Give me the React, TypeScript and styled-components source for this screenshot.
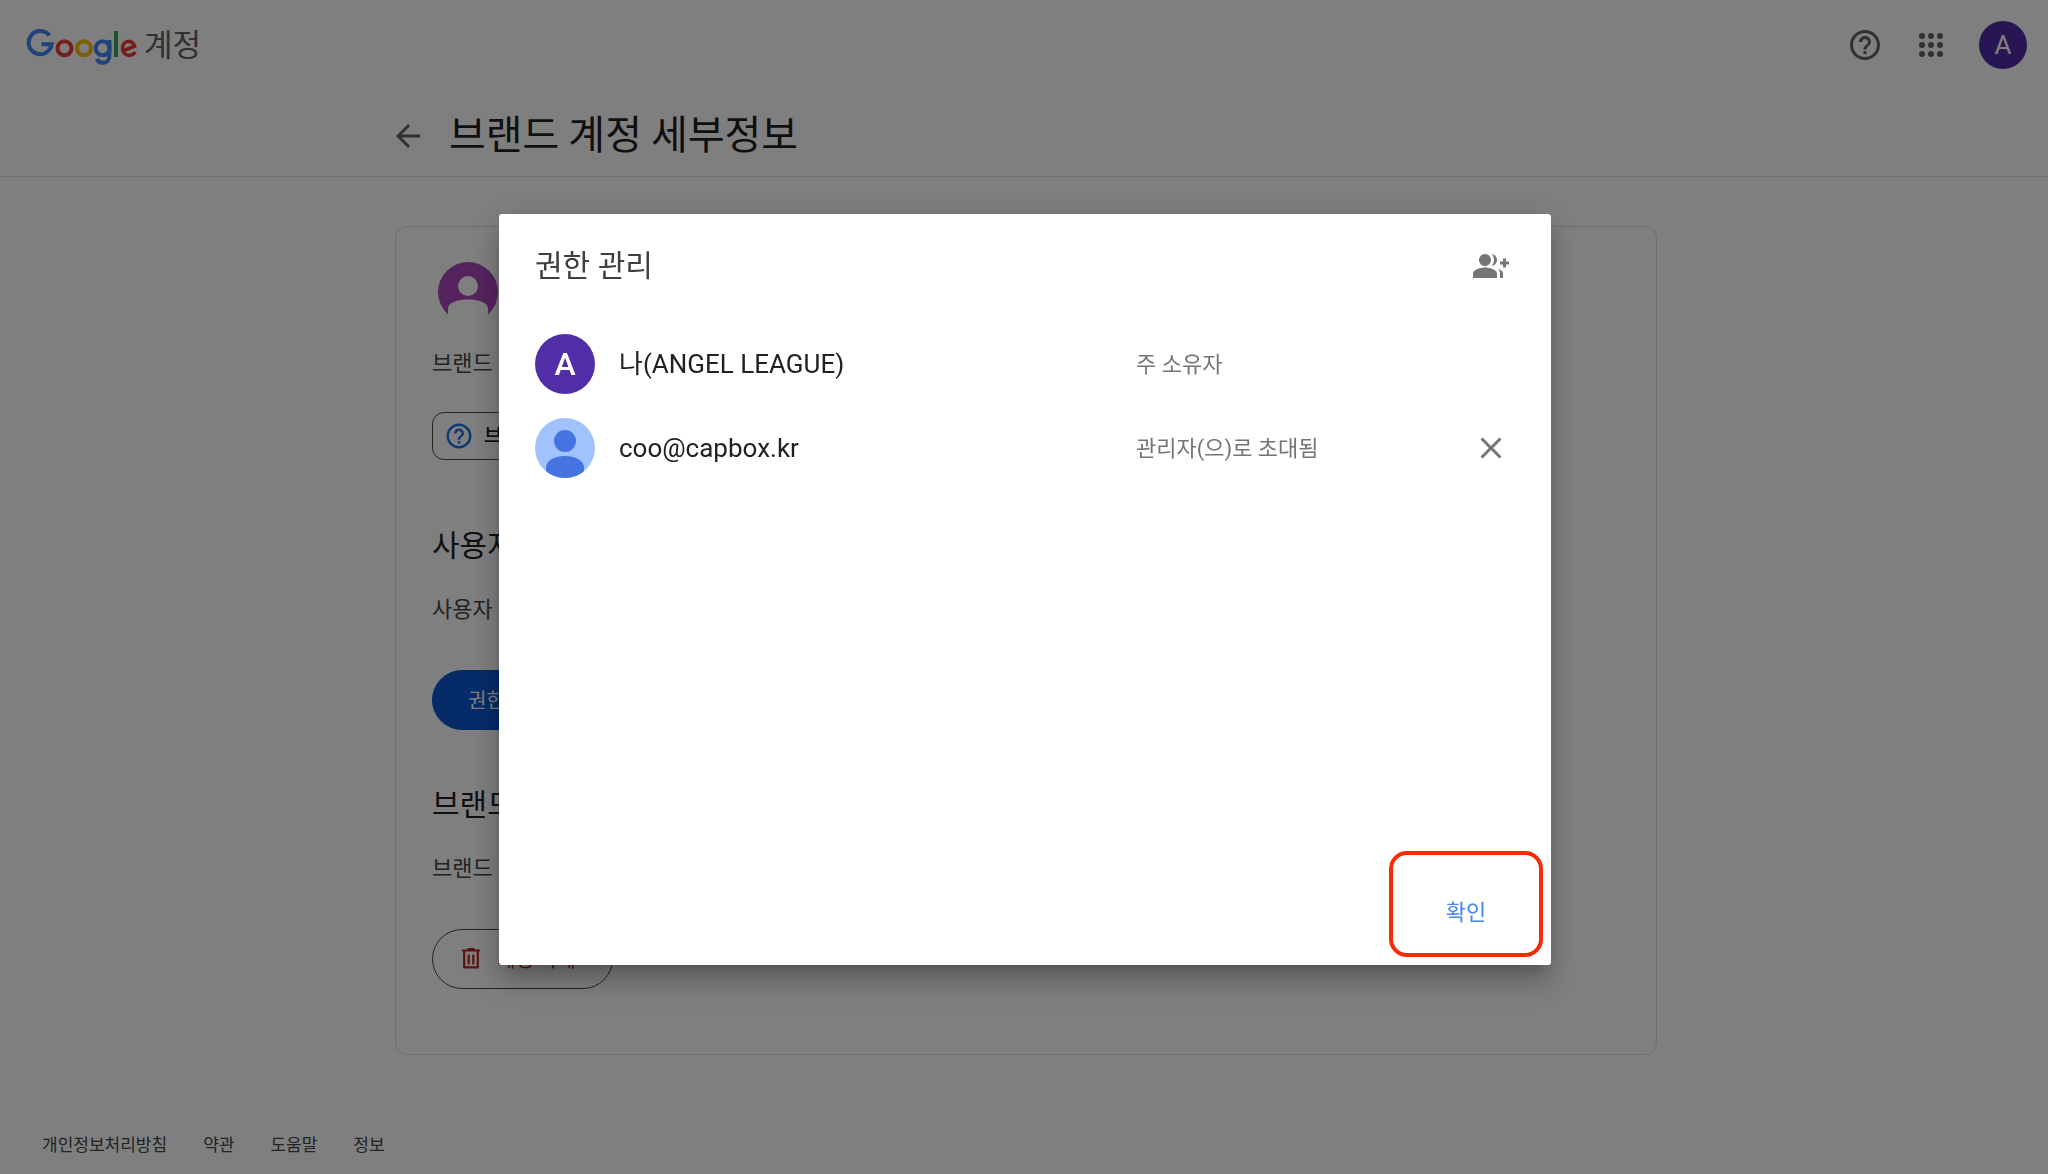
import React from "react";
import styled, { createGlobalStyle } from "styled-components";
import {
  MdArrowBack,
  MdClose,
  MdGroupAdd,
  MdHelpOutline,
} from "react-icons/md";

const GlobalStyle = createGlobalStyle`
  *, *::before, *::after { box-sizing: border-box; }
  body {
    margin: 0;
    background: #fff;
    color: #1f1f1f;
    font-family: Roboto, "Noto Sans CJK KR", sans-serif;
  }
  button { font: inherit; margin: 0; cursor: pointer; }
  h1, h2, p, ul { margin: 0; padding: 0; font-weight: 400; }
  ul { list-style: none; }
`;

const Page = styled.div`
  display: flex;
  flex-direction: column;
  min-height: 100vh;
`;

const TopBar = styled.header`
  display: flex;
  align-items: center;
  justify-content: space-between;
  height: 90px;
  padding: 0 21px 0 26px;
`;

const Brand = styled.a`
  display: flex;
  align-items: center;
  gap: 6px;
  color: #5f6368;
  font-size: 31px;
  line-height: 42px;
  text-decoration: none;

  span { padding-top: 2px; }
`;

const TopActions = styled.div`
  display: flex;
  align-items: center;
  gap: 30px;
`;

const IconButton = styled.button`
  display: grid;
  place-items: center;
  width: 36px;
  height: 36px;
  padding: 0;
  border: 0;
  background: none;
  color: ${(p) => p.color ?? "#5f6368"};
`;

const Initial = styled.span<{ $size: number; $font: number; $weight?: number }>`
  display: grid;
  place-items: center;
  flex: none;
  width: ${(p) => p.$size}px;
  height: ${(p) => p.$size}px;
  border-radius: 50%;
  background: #512da8;
  color: #fff;
  font-size: ${(p) => p.$font}px;
  font-weight: ${(p) => p.$weight ?? 400};
  line-height: 1;
`;

const AccountButton = styled(IconButton)`
  width: 48px;
  height: 48px;
`;

const TitleBar = styled.div`
  padding-left: 4px;
  border-bottom: 1px solid #dadce0;
`;

const Column = styled.div`
  width: 62%;
  max-width: 1262px;
  margin: 0 auto;
`;

const TitleRow = styled(Column)`
  display: flex;
  align-items: center;
  gap: 18px;
  height: 86px;
  padding-top: 5px;

  svg { margin-left: -10px; }
`;

const PageTitle = styled.h1`
  padding-bottom: 8px;
  font-family: "Noto Sans CJK KR", sans-serif;
  font-size: 40px;
  line-height: 52px;
`;

const Main = styled.main`
  flex: 1;
  padding: 49px 0 0 4px;
`;

const Card = styled(Column)`
  display: flex;
  flex-direction: column;
  align-items: flex-start;
  padding: 35px 36px 65px;
  border: 1px solid #dadce0;
  border-radius: 12px;
`;

const BrandAvatar = styled.svg`
  display: block;
  width: 60px;
  height: 60px;
  margin: 0 0 26px 6px;
`;

const Paragraph = styled.p`
  color: #444746;
  font-size: 22px;
  line-height: 32px;
`;

const HelpChip = styled.button`
  display: flex;
  align-items: center;
  gap: 10px;
  height: 48px;
  margin: 32px 0 66px;
  padding: 0 16px 0 11px;
  border: 1px solid #444746;
  border-radius: 12px;
  background: none;
  color: #1f1f1f;
  font-size: 20px;
  font-weight: 500;

  svg { color: #1a73e8; }
  span { padding-bottom: 3px; }
`;

const SectionTitle = styled.h2`
  margin-bottom: 28px;
  font-size: 30px;
  line-height: 40px;
`;

const Pill = styled.button<{ $filled?: boolean }>`
  display: flex;
  align-items: center;
  gap: 12px;
  height: 60px;
  margin-top: 44px;
  padding: ${(p) => (p.$filled ? "0 35px 2px" : "0 36px 2px 24px")};
  border: 1px solid ${(p) => (p.$filled ? "#0b57d0" : "#444746")};
  border-radius: 30px;
  background: ${(p) => (p.$filled ? "#0b57d0" : "none")};
  color: ${(p) => (p.$filled ? "#fff" : "#b3261e")};
  font-size: 20px;
`;

const Section = styled.section`
  & + & { margin-top: 55px; }
`;

const Footer = styled.footer`
  display: flex;
  gap: 36px;
  padding: 0 42px 17px;
`;

const FooterLink = styled.a`
  color: #444746;
  font-size: 17px;
  line-height: 24px;
  text-decoration: none;
`;

const Scrim = styled.div`
  position: fixed;
  inset: 0;
  display: grid;
  place-items: center;
  padding: 5px 0 0 2px;
  background: rgba(0, 0, 0, 0.5);
`;

const Dialog = styled.div`
  display: flex;
  flex-direction: column;
  width: 52%;
  max-width: 1052px;
  min-height: 751px;
  padding: 32px 8px 8px 36px;
  border-radius: 3px;
  background: #fff;
  box-shadow: 0 11px 15px -7px rgba(0, 0, 0, 0.2),
    0 20px 30px 2px rgba(0, 0, 0, 0.14), 0 6px 30px 4px rgba(0, 0, 0, 0.12);
`;

const DialogHeader = styled.div`
  display: flex;
  align-items: center;
  justify-content: space-between;
  padding-right: 34px;
`;

const DialogTitle = styled.h2`
  color: #3c4043;
  font-size: 30px;
  line-height: 40px;
`;

const People = styled.ul`
  display: grid;
  gap: 24px;
  flex: 1;
  align-content: start;
  padding: 48px 34px 0 0;
`;

const Person = styled.li`
  display: grid;
  grid-template-columns: 60px 1fr 337px 36px;
  align-items: center;
  height: 60px;
`;

const PersonName = styled.span`
  padding-left: 24px;
  color: #212121;
  font-size: 26px;
  line-height: 36px;
`;

const PersonRole = styled.span`
  padding-top: 2px;
  color: #757575;
  font-size: 22px;
  line-height: 32px;
`;

const Confirm = styled.button`
  align-self: flex-end;
  width: 154px;
  height: 106px;
  padding: 12px 0 0;
  border: 4px solid #f92b06;
  border-radius: 18px;
  background: none;
  color: #4285f4;
  font-size: 22px;
`;

const GoogleLogo = () => (
  <svg width="112" height="40" viewBox="26 25 112 40" fill="none" strokeWidth="4" role="img" aria-label="Google">
    <path d="M49.4 35.4A11.6 11.6 0 1 0 51.7 44.3H41.5" stroke="#4285f4" />
    <circle cx="64.5" cy="48.3" r="7" stroke="#ea4335" />
    <circle cx="84" cy="48.3" r="7" stroke="#fbbc05" />
    <circle cx="102.7" cy="48.3" r="7" stroke="#4285f4" />
    <path d="M109.4 40V55.5C109.4 60.5 106.5 62.8 103 62.8C99.8 62.8 97.8 61.2 96.7 59" stroke="#4285f4" />
    <path d="M116 31V57" stroke="#34a853" />
    <path d="M123.4 50.8L134.6 46.1C133.5 43 131.5 41.3 128.8 41.3C125.2 41.3 122.6 44.2 122.6 48.2C122.6 52.3 125.4 55.3 129.3 55.3C132.1 55.3 133.9 54 135.4 52" stroke="#ea4335" strokeWidth="3.7" />
  </svg>
);

const TrashIcon = () => (
  <svg width="28" height="28" viewBox="0 0 28 28" fill="none" stroke="currentColor" aria-hidden="true">
    <path d="M5 6.5H23M10.5 5H17.5" strokeWidth="2.2" />
    <path d="M7.2 7V23.4H20.8V7" strokeWidth="2.2" strokeLinejoin="round" />
    <path d="M11.7 10.5V20.5M16.3 10.5V20.5" strokeWidth="2.2" />
  </svg>
);

const UserAvatar = () => (
  <svg width="60" height="60" viewBox="0 0 60 60" aria-hidden="true">
    <defs>
      <clipPath id="avatar-round"><circle cx="30" cy="30" r="30" /></clipPath>
    </defs>
    <g clipPath="url(#avatar-round)">
      <rect width="60" height="60" fill="#a0c3ff" />
      <circle cx="30" cy="23" r="11" fill="#4374e0" />
      <path d="M11 60V50C11 42 20 38 30 38S49 42 49 50V60Z" fill="#4374e0" />
    </g>
  </svg>
);

type Member = { name: string; role: string; initial?: string; removable?: boolean };

const members: Member[] = [
  { name: "나(ANGEL LEAGUE)", role: "주 소유자", initial: "A" },
  { name: "coo@capbox.kr", role: "관리자(으)로 초대됨", removable: true },
];

const footerLinks = ["개인정보처리방침", "약관", "도움말", "정보"];

export default function App() {
  return (
    <>
      <GlobalStyle />
      <Page>
        <TopBar>
          <Brand href="#">
            <GoogleLogo />
            <span>계정</span>
          </Brand>
          <TopActions>
            <IconButton aria-label="도움말"><MdHelpOutline size={36} /></IconButton>
            <IconButton aria-label="앱">
              <svg width="36" height="36" viewBox="0 0 24 24" fill="currentColor">
                {[6, 12, 18].map((y) => [6, 12, 18].map((x) => <circle key={`${x}-${y}`} cx={x} cy={y} r="2" />))}
              </svg>
            </IconButton>
            <AccountButton aria-label="계정">
              <Initial $size={48} $font={26}>A</Initial>
            </AccountButton>
          </TopActions>
        </TopBar>

        <TitleBar>
          <TitleRow>
            <IconButton aria-label="뒤로"><MdArrowBack size={36} /></IconButton>
            <PageTitle>브랜드 계정 세부정보</PageTitle>
          </TitleRow>
        </TitleBar>

        <Main>
          <Card>
            <BrandAvatar viewBox="0 0 60 60" aria-hidden="true">
              <path
                d="M10 52.4A30 30 0 1 1 50 52.4V47C50 40 40 37.5 30 37.5S10 40 10 47ZM30 34A10 10 0 1 0 30 14A10 10 0 0 0 30 34Z"
                fill="#ab47bc"
                fillRule="evenodd"
              />
            </BrandAvatar>
            <Paragraph>브랜드</Paragraph>
            <HelpChip><MdHelpOutline size={30} /><span>브랜드</span></HelpChip>
            <Section>
              <SectionTitle>사용자</SectionTitle>
              <Paragraph>사용자</Paragraph>
              <Pill $filled>권한 관리</Pill>
            </Section>
            <Section>
              <SectionTitle>브랜드</SectionTitle>
              <Paragraph>브랜드</Paragraph>
              <Pill><TrashIcon />계정 삭제</Pill>
            </Section>
          </Card>
        </Main>

        <Footer>
          {footerLinks.map((label) => <FooterLink key={label} href="#">{label}</FooterLink>)}
        </Footer>
      </Page>

      <Scrim>
        <Dialog role="dialog" aria-modal="true" aria-labelledby="dialog-title">
          <DialogHeader>
            <DialogTitle id="dialog-title">권한 관리</DialogTitle>
            <IconButton color="#757575" aria-label="새 사용자 초대"><MdGroupAdd size={36} /></IconButton>
          </DialogHeader>
          <People>
            {members.map((m) => (
              <Person key={m.name}>
                {m.initial ? <Initial $size={60} $font={32} $weight={500}>{m.initial}</Initial> : <UserAvatar />}
                <PersonName>{m.name}</PersonName>
                <PersonRole>{m.role}</PersonRole>
                {m.removable && (
                  <IconButton color="#757575" aria-label="삭제"><MdClose size={36} /></IconButton>
                )}
              </Person>
            ))}
          </People>
          <Confirm>확인</Confirm>
        </Dialog>
      </Scrim>
    </>
  );
}
